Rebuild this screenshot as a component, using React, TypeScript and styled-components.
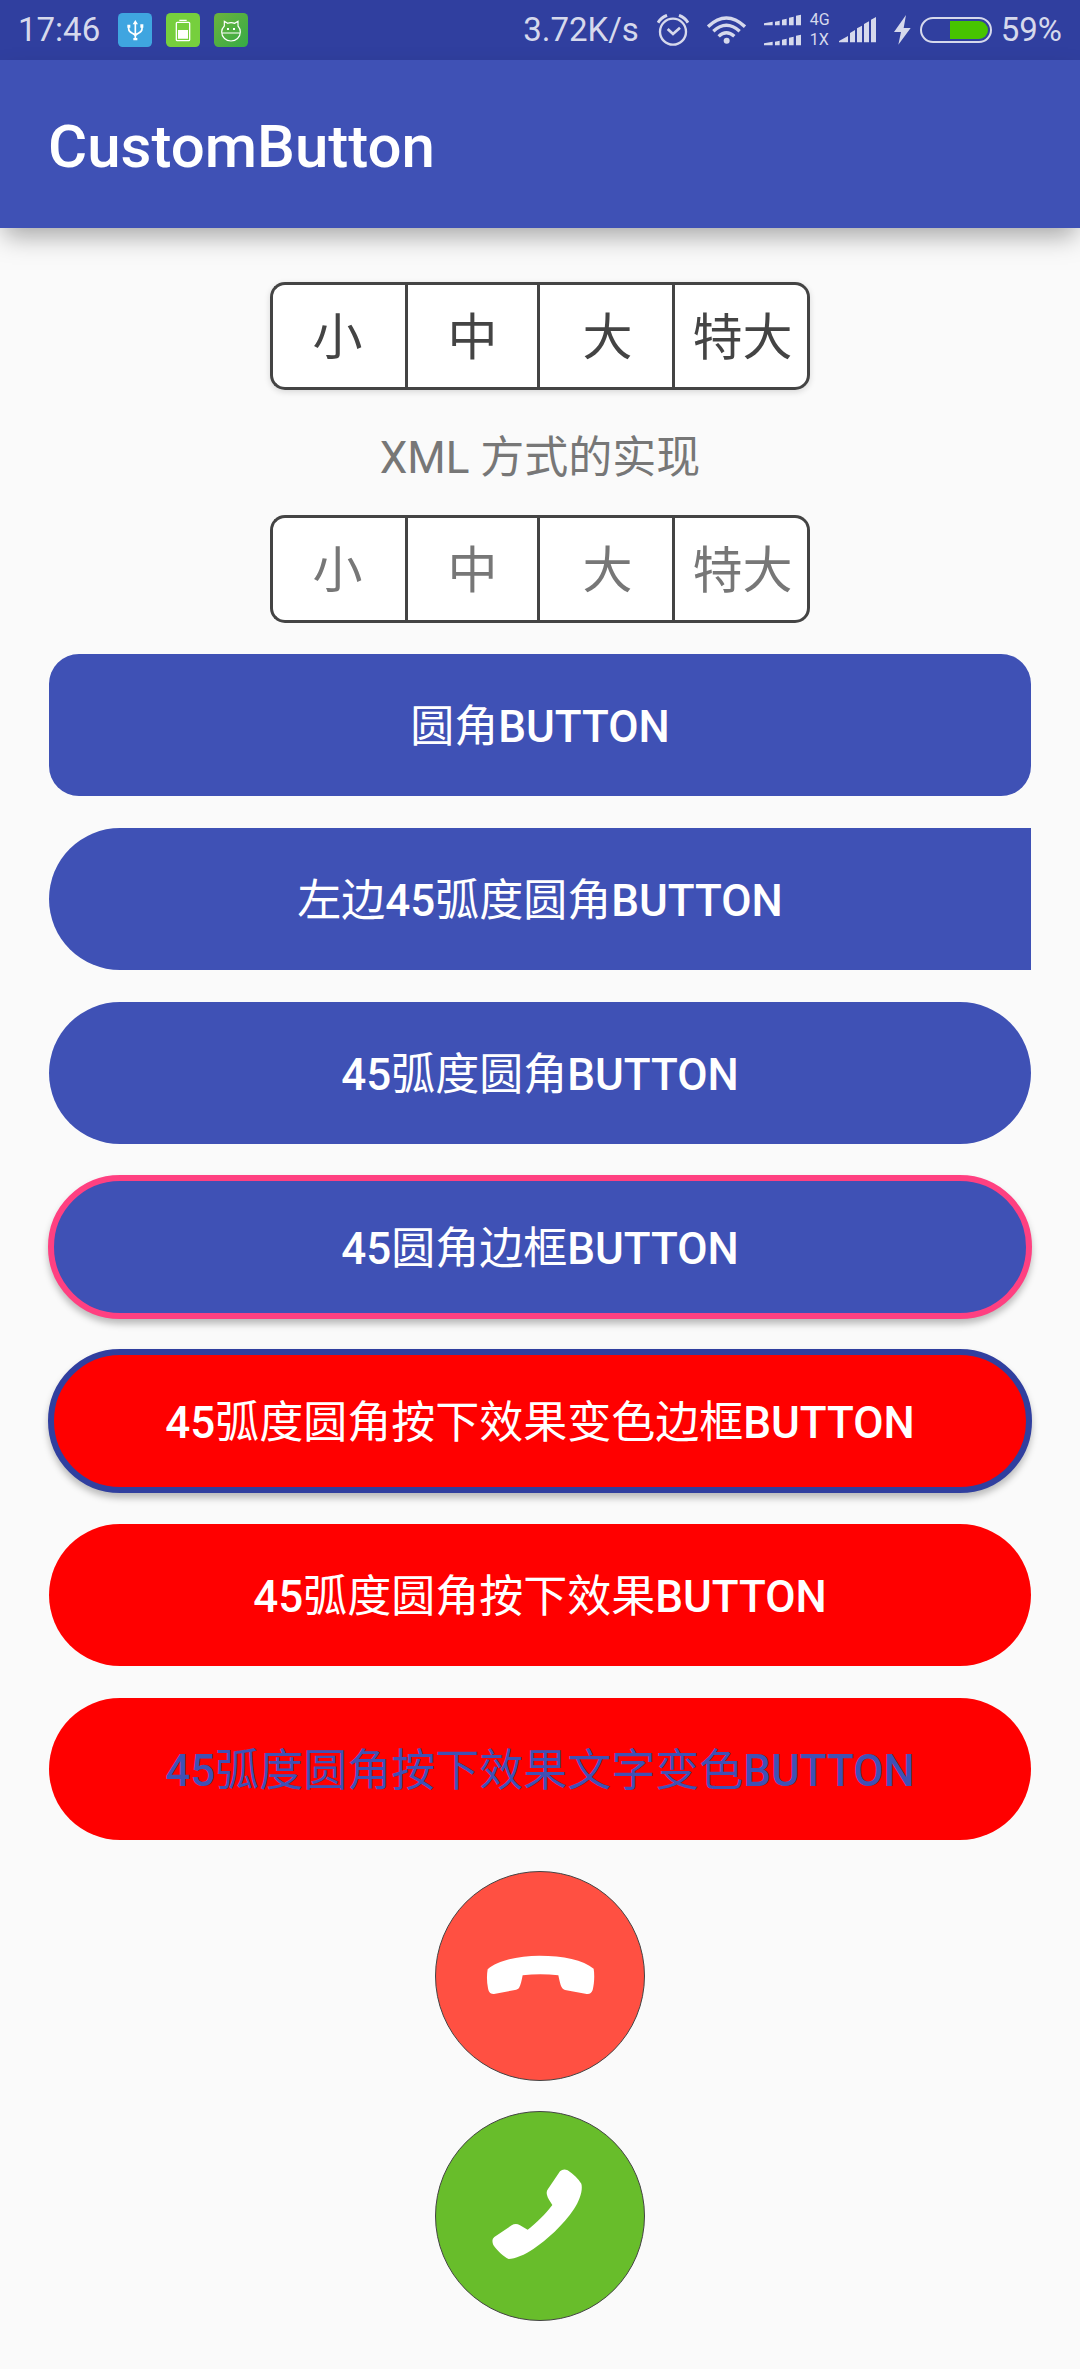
import React from "react";
import styled, { createGlobalStyle, css } from "styled-components";

const color = {
  primary: "#3f51b5",
  primaryDark: "#303f9f",
  accent: "#ff4081",
  pressed: "#ff0000",
  surface: "#fafafa",
  line: "#444444",
  status: "#d6d9ec",
};

const GlobalStyle = createGlobalStyle`
  *, *::before, *::after { box-sizing: border-box; }
  body {
    margin: 0;
    background: ${color.surface};
    font-family: Roboto, "Noto Sans CJK SC", sans-serif;
  }
  button {
    margin: 0;
    padding: 0;
    font: inherit;
    cursor: pointer;
  }
  svg { display: block; flex: none; }
`;

const StatusBar = styled.div`
  display: flex;
  align-items: center;
  justify-content: space-between;
  height: 60px;
  padding: 0 18px;
  background: ${color.primaryDark};
  color: ${color.status};
  font-size: 33px;
  line-height: 40px;
`;

const StatusGroup = styled.div<{ $gap: number }>`
  display: flex;
  align-items: center;
  gap: ${(p) => p.$gap}px;
`;

const NetworkTypes = styled.div`
  display: flex;
  flex-direction: column;
  font-size: 16px;
  line-height: 20px;
`;

const AppBar = styled.header`
  display: flex;
  align-items: center;
  height: 168px;
  padding: 6px 48px 0;
  background: ${color.primary};
  box-shadow: 0 12px 24px -4px rgba(0, 0, 0, 0.34);
`;

const Title = styled.h1`
  margin: 0;
  color: #fff;
  font-size: 60px;
  font-weight: 500;
  line-height: 72px;
`;

const Content = styled.main`
  display: flex;
  flex-direction: column;
  align-items: center;
  gap: 30px;
  padding: 54px 48px 48px;
`;

const Segments = styled.div<{ $raised?: boolean }>`
  display: grid;
  grid-template-columns: repeat(4, 135px);
  height: 108px;
  border-radius: 15px;
  color: ${(p) => (p.$raised ? color.line : "#777777")};
  box-shadow: ${(p) => (p.$raised ? "0 2px 6px rgba(0, 0, 0, 0.14)" : "none")};
`;

const Segment = styled.button`
  padding: 4px 0 0 3px;
  border: solid ${color.line};
  border-width: 3px 3px 3px 0;
  background: #fff;
  color: inherit;
  font-size: 50px;
  line-height: 60px;

  &:first-child {
    padding: 4px 3px 0 0;
    border-width: 3px 0 3px 3px;
    border-radius: 15px 0 0 15px;
  }
  &:nth-child(2) {
    padding-left: 0;
    border-left-width: 3px;
  }
  &:last-child {
    border-radius: 0 15px 15px 0;
  }
`;

const Caption = styled.p`
  margin: 0;
  padding-top: 11px;
  color: #777777;
  font-size: 44px;
  line-height: 54px;
`;

type Shape = "rounded" | "leftPill" | "pill";

const radius: Record<Shape, string> = {
  rounded: "31px",
  leftPill: "72px 0 0 72px",
  pill: "72px",
};

const WideButton = styled.button<{
  $shape: Shape;
  $fill: string;
  $outline?: string;
  $text?: string;
}>`
  width: 100%;
  height: 144px;
  padding-top: 4px;
  border: 1px solid transparent;
  border-radius: ${(p) => radius[p.$shape]};
  background: ${(p) => p.$fill} padding-box;
  color: ${(p) => p.$text ?? "#fff"};
  font-size: 44px;
  font-weight: 500;
  line-height: 60px;

  ${(p) =>
    p.$outline &&
    css`
      border: 6px solid ${p.$outline};
      background-clip: border-box;
      box-shadow: 0 5px 7px rgba(0, 0, 0, 0.26);
    `}
`;

const Han = styled.span`
  font-weight: 400;
`;

const RoundButton = styled.button<{ $fill: string }>`
  width: 210px;
  height: 210px;
  border: 1px solid ${color.line};
  border-radius: 50%;
  background: ${(p) => p.$fill};
`;

const UsbIcon = () => (
  <svg width="34" height="34" viewBox="354 39 102 102" aria-hidden="true">
    <rect x="354" y="39" width="102" height="102" rx="14" fill="#3fa5e0" />
    <g fill="none" stroke="#fff" strokeWidth="5">
      <path d="M406 68V114M386 80V87C386 101 406 98 406 109M426 80V87C426 101 406 98 406 109" />
    </g>
    <path d="M398 73L406 60L414 73ZM400 114H412V121H400ZM382 74H391V83H382ZM421 73H430V83H421Z" fill="#fff" />
  </svg>
);

const BatteryAppIcon = () => (
  <svg width="34" height="34" viewBox="498 39 102 102" aria-hidden="true">
    <rect x="498" y="39" width="102" height="102" rx="14" fill="#76cf3d" />
    <rect x="529" y="67" width="40" height="55" rx="3" fill="none" stroke="#fff" strokeWidth="4" />
    <path d="M538 59H560V63H538ZM534 90H564V116H534Z" fill="#fff" />
  </svg>
);

const CatIcon = () => (
  <svg width="34" height="34" viewBox="642 39 102 102" aria-hidden="true">
    <defs>
      <linearGradient id="cat" x1="0" y1="0" x2="1" y2="1">
        <stop offset="0" stopColor="#6cb33c" />
        <stop offset="1" stopColor="#35ab47" />
      </linearGradient>
    </defs>
    <rect x="642" y="39" width="102" height="102" rx="14" fill="url(#cat)" />
    <path
      d="M673 78L673 64L683 70Q693 66 704 70L714 64L714 78Q721 86 721 96C721 112 708 123 693 123C678 123 665 112 665 96Q665 86 673 78ZM666 99H720"
      fill="none"
      stroke="#fff"
      strokeWidth="3.5"
    />
    <path d="M681 84H687V90H681ZM699 84H705V90H699Z" fill="#fff" />
  </svg>
);

const AlarmIcon = () => (
  <svg width="32" height="32" viewBox="468 39 96 96" fill="none" stroke={color.status} aria-hidden="true">
    <circle cx="516" cy="92" r="39" strokeWidth="7" />
    <path d="M500 84L516 99L537 80" strokeWidth="8" />
    <path d="M471 65Q480 50 498 43M534 43Q552 50 561 65" strokeWidth="9" />
  </svg>
);

const WifiIcon = () => (
  <svg width="39" height="28" viewBox="616 46 117 84" fill="none" stroke={color.status} aria-hidden="true">
    <path d="M619 78Q674 26 730 78" strokeWidth="10" />
    <path d="M635 92Q674 56 714 92" strokeWidth="10" />
    <path d="M651 107Q674 85 698 107" strokeWidth="10" />
    <circle cx="675" cy="120" r="9" fill={color.status} stroke="none" />
  </svg>
);

const SmallSignalsIcon = () => (
  <svg width="37" height="32" viewBox="0 0 111 96" fill={color.status} aria-hidden="true">
    {[0, 60].map((y) => (
      <path
        key={y}
        transform={`translate(0 ${y})`}
        d="M0 28L26 23V34H0ZM33 23L47 20V34H33ZM54 17L68 14V34H54ZM75 11L89 8V34H75ZM96 5L111 2V34H96Z"
      />
    ))}
  </svg>
);

const SignalIcon = () => (
  <svg width="37" height="26" viewBox="174 53 111 78" fill={color.status} aria-hidden="true">
    <path d="M174 125L201 110V129H174ZM207 101L222 92V129H207ZM228 87L243 79V129H228ZM249 74L264 66V129H249ZM270 61L285 53V129H270Z" />
  </svg>
);

const BoltIcon = () => (
  <svg width="17" height="30" viewBox="338 46 51 90" fill={color.status} aria-hidden="true">
    <path d="M374 46L338 97H359L351 135L388 85H367Z" />
  </svg>
);

const BatteryIcon = () => (
  <svg width="72" height="26" viewBox="411 51 216 78" aria-hidden="true">
    <rect x="414" y="54" width="210" height="72" rx="36" fill="none" stroke={color.status} strokeWidth="6" />
    <path d="M501 63H588A27 27 0 0 1 588 117H501Z" fill="#47c400" />
  </svg>
);

const HangUpIcon = () => (
  <svg width="208" height="208" viewBox="48 66 624 624" fill="#fff" aria-hidden="true">
    <path d="M203 358C235 330 300 317 358 317C430 317 490 330 521 356C524 375 523 400 518 420C514 431 508 433 496 431L435 420C422 417 420 398 415 376Q361 370 308 376C305 392 302 405 297 414C294 418 290 419 285 420L222 432C210 433 206 425 204 415C200 395 200 375 203 358Z" />
  </svg>
);

const CallIcon = () => (
  <svg width="208" height="208" viewBox="48 66 624 624" fill="#fff" aria-hidden="true">
    <path d="M420 244Q430 235 443 241C460 252 475 267 484 281C489 300 480 330 462 357C430 405 380 450 340 477C315 494 285 507 266 507C250 500 232 482 220 465C216 455 216 447 223 441L275 406C283 401 292 401 300 406L323 419C345 404 378 370 397 345C390 333 383 325 381 315C379 308 380 302 384 297Z" />
  </svg>
);

const sizes = ["小", "中", "大", "特大"];

type ButtonSpec = {
  prefix?: string;
  lead?: string;
  han: string;
  shape: Shape;
  fill: string;
  outline?: string;
  text?: string;
};

const buttons: ButtonSpec[] = [
  { han: "圆角", shape: "rounded", fill: color.primary },
  { prefix: "左边", lead: "45", han: "弧度圆角", shape: "leftPill", fill: color.primary },
  { lead: "45", han: "弧度圆角", shape: "pill", fill: color.primary },
  { lead: "45", han: "圆角边框", shape: "pill", fill: color.primary, outline: color.accent },
  { lead: "45", han: "弧度圆角按下效果变色边框", shape: "pill", fill: color.pressed, outline: color.primaryDark },
  { lead: "45", han: "弧度圆角按下效果", shape: "pill", fill: color.pressed },
  { lead: "45", han: "弧度圆角按下效果文字变色", shape: "pill", fill: color.pressed, text: color.primary },
];

export default function App() {
  return (
    <>
      <GlobalStyle />
      <StatusBar>
        <StatusGroup $gap={18}>
          <span>17:46</span>
          <StatusGroup $gap={14}>
            <UsbIcon />
            <BatteryAppIcon />
            <CatIcon />
          </StatusGroup>
        </StatusGroup>
        <StatusGroup $gap={18}>
          <span>3.72K/s</span>
          <AlarmIcon />
          <WifiIcon />
          <StatusGroup $gap={9}>
            <SmallSignalsIcon />
            <NetworkTypes>
              <span>4G</span>
              <span>1X</span>
            </NetworkTypes>
            <SignalIcon />
          </StatusGroup>
          <StatusGroup $gap={9}>
            <BoltIcon />
            <BatteryIcon />
            <span>59%</span>
          </StatusGroup>
        </StatusGroup>
      </StatusBar>
      <AppBar>
        <Title>CustomButton</Title>
      </AppBar>
      <Content>
        <Segments $raised>
          {sizes.map((size) => (
            <Segment key={size} type="button">{size}</Segment>
          ))}
        </Segments>
        <Caption>XML 方式的实现</Caption>
        <Segments>
          {sizes.map((size) => (
            <Segment key={size} type="button">{size}</Segment>
          ))}
        </Segments>
        {buttons.map((b, i) => (
          <WideButton key={i} type="button" $shape={b.shape} $fill={b.fill} $outline={b.outline} $text={b.text}>
            {b.prefix && <Han>{b.prefix}</Han>}
            {b.lead}
            <Han>{b.han}</Han>
            BUTTON
          </WideButton>
        ))}
        <RoundButton type="button" $fill="#ff5042" aria-label="挂断">
          <HangUpIcon />
        </RoundButton>
        <RoundButton type="button" $fill="#68bd2b" aria-label="接听">
          <CallIcon />
        </RoundButton>
      </Content>
    </>
  );
}
